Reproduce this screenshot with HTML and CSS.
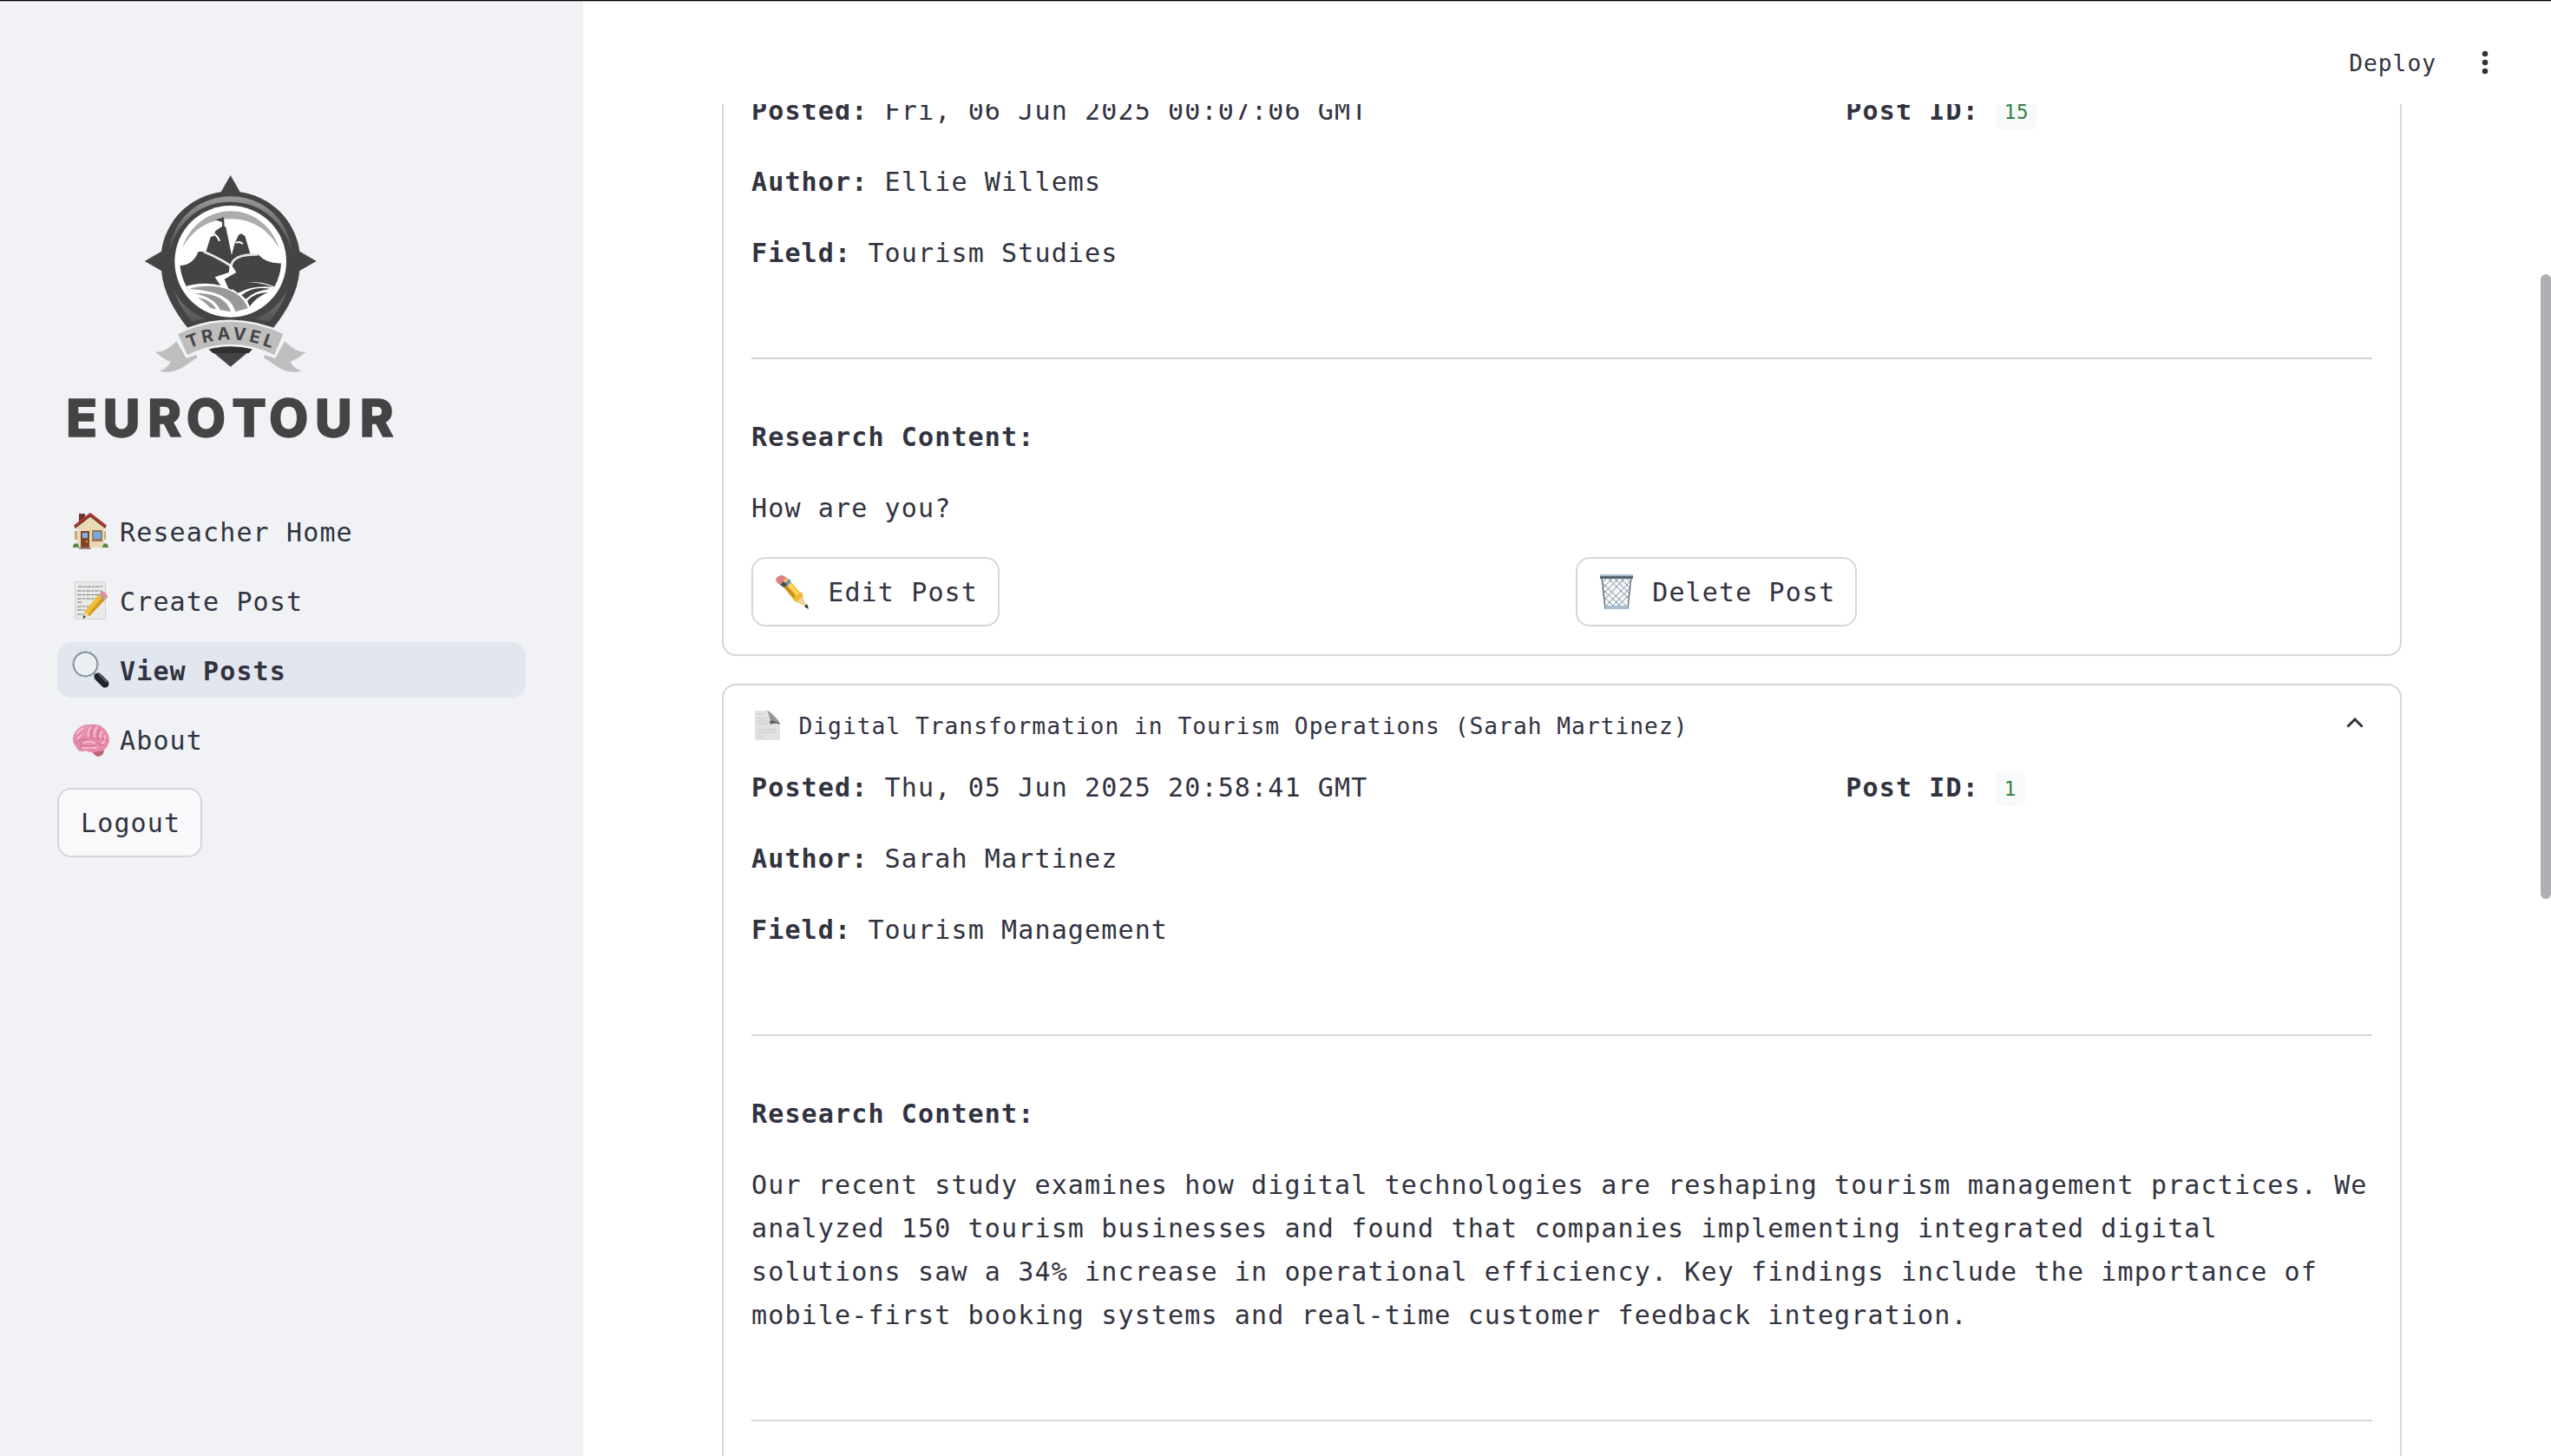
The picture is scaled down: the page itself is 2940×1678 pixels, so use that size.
FILE: index.html
```
<!DOCTYPE html>
<html lang="en">
<head>
<meta charset="utf-8">
<title>View Posts</title>
<link rel="stylesheet" href="styles.css">
</head>
<body>
<div class="app">
  <aside class="sidebar">
    <svg class="logo" viewBox="18 0 1242 1050" role="img" aria-label="Eurotour Travel">
      <defs>
        <linearGradient id="rim" x1="0" y1="0" x2="0" y2="1"><stop offset="0" stop-color="#999"/><stop offset="1" stop-color="#444"/></linearGradient>
        <linearGradient id="low" x1="0" y1="0" x2="0" y2="1"><stop offset="0" stop-color="#777"/><stop offset="1" stop-color="#555"/></linearGradient>
        <clipPath id="scene"><circle cx="617" cy="364" r="175"/></clipPath>
        <path id="arc" d="M474 664Q616 602 772 670"/>
      </defs>
      <path fill="#444" d="M617 66L650 124C762 140 842 226 856 329L914 363L856 396C850 470 812 535 762 598L694 664L617 728L540 664L472 598C422 535 384 470 378 396L320 363L378 329C392 226 472 140 584 124Z"/>
      <path fill="url(#rim)" d="M402 345C410 225 500 139 617 139C734 139 824 225 832 345C805 225 722 158 617 158C512 158 429 225 402 345Z"/>
      <path fill="url(#low)" d="M420 458Q450 530 532 562L484 572Q440 525 420 458ZM814 458Q784 530 702 562L750 572Q794 525 814 458Z"/>
      <circle cx="617" cy="364" r="193" fill="#fff"/>
      <path fill="#adadad" d="M450 318C475 240 540 190 617 190C694 190 760 240 785 318C745 250 690 217 617 217C544 217 488 250 450 318Z"/>
      <g clip-path="url(#scene)">
        <path fill="#444" d="M438 378Q485 380 506 330L532 330L548 280L560 275L565 258L588 243V228L565 220L594 211L596 242L601 246L621 342L632 300L645 272L655 268L667 276L685 337L712 340Q745 375 800 370V470H430Z"/>
        <path fill="none" stroke="#fff" stroke-width="6" d="M562 270Q575 280 579 294M635 300Q647 293 660 303"/>
        <path fill="none" stroke="#e8e8e8" stroke-width="8" d="M524 330Q575 350 622 382M620 378Q625 338 712 340"/>
        <path fill="#fff" d="M615 374L626 384L637 402L596 425L612 462L584 450L563 418L611 402Z"/>
        <path fill="#fff" d="M430 460Q540 420 620 462Q700 410 790 462V560H430Z"/>
        <path fill="#999" d="M474 459C550 435 655 455 677 526L634 538C620 485 565 465 474 459Z"/>
        <path fill="#999" d="M492 474C560 472 605 493 618 538L582 532C565 500 540 486 492 474ZM503 488Q550 495 568 529L548 526Q532 506 503 488Z"/>
        <path fill="#444" d="M618 456Q680 420 763 452Q695 445 643 473ZM655 481Q695 448 754 459Q700 465 670 494ZM675 500Q700 472 746 471Q705 488 683 520Z"/>
      </g>
      <path fill="#303030" d="M538 664Q616 638 696 664L680 681H556Z"/>
      <path fill="#bebebe" d="M357 677Q390 681 430 640L464 699L498 687L503 697C460 720 430 760 370 742Q398 735 410 711Q382 699 357 677ZM879 677Q846 681 804 640L772 699L736 687L731 697C774 720 804 760 864 742Q836 735 824 711Q852 699 879 677Z"/>
      <path fill="#bebebe" stroke="#f0f2f6" stroke-width="7" d="M430 613Q616 525 804 613L770 692Q616 616 466 692Z"/>
      <text class="ribbon"><textPath href="#arc" textLength="292">TRAVEL</textPath></text>
      <text class="wordmark" y="970" x="49 176 331 464 622 750 909 1064">EUROTOUR</text>
    </svg>
    <nav class="nav">
      <a class="nav-item">
        <svg class="nav-icon" viewBox="0 0 44 44"><path fill="#70362c" d="M8 2h7v11H8z"/><path fill="#ead9b5" d="M22 4L6 17v24h31V17z"/><path fill="#c8aa7a" d="M3 22h3v10H3zM37 22h2v10h-2z"/><path fill="none" stroke="#a93830" stroke-width="3.500" stroke-linejoin="round" d="M3 17L21 3L39 17"/><path fill="none" stroke="#443330" d="M3 19L21 5L39 19"/><path fill="#814328" d="M10 22h10v20H10z"/><path fill="#7db2e4" d="M12 24h6v6h-6z"/><path fill="#a07855" d="M23 21h12v13H23z"/><path fill="#73abdc" d="M24.500 23h9v8h-9z"/><circle cx="17" cy="34" r="1" fill="#efc33b"/><path fill="#57873e" d="M1 41a3 4 0 0 1 7 0zM35 41a3 4 0 0 1 7 0z"/><path fill="#968a80" d="M8 41h14v2H8z"/></svg>
        <span>Reseacher Home</span>
      </a>
      <a class="nav-item">
        <svg class="nav-icon" viewBox="0 0 44 44"><path fill="#e9e9e8" stroke="#d2d2d2" d="M3.500 0.500h35v43h-35z"/><path fill="none" stroke="#777" stroke-dasharray="5 1 3 1" d="M7 6h28M6 11h29M6 15.500h27M6 20h24M6 24h5M6 29h18M6 33h12M6 38h11"/><path fill="#f0bd38" d="M14 35L31 15l7 6-18 19z"/><path fill="#d29724" d="M18 39L35 18l3 3-18 19z"/><path fill="#9baabb" d="M31 15l3-3 7 6-3 4z"/><path fill="#e88d92" d="M34 12q4-1 7 5l-1 3-8-6z"/><path fill="#eed5a1" d="M14 35l6 4-7 3z"/><path fill="#333" d="M13 39l3 2-3 2z"/></svg>
        <span>Create Post</span>
      </a>
      <a class="nav-item active">
        <svg class="nav-icon" viewBox="0 0 44 44"><path stroke="#999ca0" stroke-width="3" d="M24 25l5 5"/><path stroke="#1e2327" stroke-width="9" stroke-linecap="round" d="M30 30l8 8"/><path stroke="#67717a" stroke-width="1.500" d="M31 27l9 9"/><circle cx="15.500" cy="15.500" r="14" fill="#edf0f3" stroke="#686e75" stroke-width="2"/><circle cx="15.500" cy="15.500" r="14.700" fill="none" stroke="#b5cae4"/></svg>
        <span>View Posts</span>
      </a>
      <a class="nav-item">
        <svg class="nav-icon" viewBox="0 0 44 44"><path fill="#bd6579" d="M22 35q7-4 15 0-1 7-8 7-4-2-7-7z"/><path fill="#e68bab" d="M2 27Q-1 19 5 12Q11 4 21 5Q33 3 39 12Q45 20 42 27Q39 36 30 36Q22 39 16 35Q7 38 5 31Z"/><path fill="none" stroke="#f7bed0" stroke-width="2" stroke-linecap="round" d="M6 16q3-5 7-7M16 8q-3 7-9 13M22 8q-5 6-3 11M29 8q-4 4-3 12M35 13q-4 3-2 9M38 18q1 6-4 10M13 26q9-3 14 1M13 32q8-1 15 0"/><path fill="none" stroke="#cb6c8d" d="M4 26q8-6 12-3q4-6 12-1q8-2 13 3M10 32q-1-7 6-9M15 8q-1 8-8 9M24 6q-3 7-2 13M32 8q-4 7-2 14M12 29q11 4 17-3q4 4 8 2"/></svg>
        <span>About</span>
      </a>
    </nav>
    <button class="button logout"><span>Logout</span></button>
  </aside>

  <main class="main">
    <header class="toolbar">
      <span class="deploy">Deploy</span>
      <svg class="menu" viewBox="0 0 8 28"><circle cx="4" cy="4" r="3.300"/><circle cx="4" cy="14" r="3.300"/><circle cx="4" cy="24" r="3.300"/></svg>
    </header>
    <div class="scroll">
      <div class="posts">
        <section class="card continued">
          <div class="meta">
            <div class="facts">
              <p><b>Posted:</b> Fri, 06 Jun 2025 00:07:06 GMT</p>
              <p><b>Author:</b> Ellie Willems</p>
              <p><b>Field:</b> Tourism Studies</p>
            </div>
            <div class="post-id"><b>Post ID:</b><code>15</code></div>
          </div>
          <hr>
          <div class="body">
            <p><b>Research Content:</b></p>
            <p>How are you?</p>
          </div>
          <div class="actions">
            <div><button class="button"><svg class="emoji" viewBox="0 0 42 42"><path fill="#efb930" d="M8 12l7-7 18 20 2 11-11-4z"/><path fill="#ffd95a" d="M11 9l3-3 18 20-3 2z"/><path fill="#ca8c1d" d="M8 12l3-2 17 19-2 3z"/><path fill="#efb930" d="M22 28l10-7 2 7-7 6z"/><path fill="#efd39b" d="M26 33l7-7 6 14z"/><path fill="#282c31" d="M35 38l3-3 2 6z"/><path fill="#7392b1" d="M11 12l6-6 3 3-6 7z"/><path fill="#4b4c50" d="M6 12l5-3 4 4-4 3z"/><path fill="#dd8182" d="M2 7q2-5 8-5l5 3-8 8q-4-2-5-6z"/></svg><span>Edit Post</span></button></div>
            <div><button class="button"><svg class="emoji" viewBox="0 0 42 42"><path fill="#f4f6f8" d="M4 4h34l-4 36H8z"/><path fill="none" stroke="#768394" stroke-width="0.900" d="M4 10l29 28M4 17l24 23M5 25l15 15M10 4l25 25M17 4l20 20M24 4l13 13M31 4l6 6M38 8L8 38M37 16L14 40M36 24L20 40M32 4L6 31M25 4L5 24M18 4L4 18M11 4L4 11"/><path fill="none" stroke="#697581" stroke-width="1.500" d="M4 4l4 36h26l4-36"/><path fill="#59636e" d="M2 2h38v4H2z"/><path fill="#a7bdd2" d="M2 1h38v2H2zM8 37h26v4H8z"/></svg><span>Delete Post</span></button></div>
          </div>
        </section>

        <section class="card">
          <div class="summary">
            <svg class="page-icon" viewBox="0 0 37 36"><path fill="#e2e2e2" d="M4 1h17q1 11 12 15v19H4z"/><path fill="none" stroke="#c7c7c7" d="M7 5h7M7 10h12M7 13h13M7 16h14M7 23h22M7 26h20M7 31h7"/><path fill="#989898" d="M18 1q4 1 11 9 4 4 4 7-6-3-11-1-1-10-4-15z"/><path fill="#606060" d="M21 13q6-2 12 4-6-3-11 0z"/></svg>
            <span class="summary-title">Digital Transformation in Tourism Operations (Sarah Martinez)</span>
            <svg class="chevron" viewBox="0 0 20 12"><path d="M1.500 10.500L10 2l8.500 8.500"/></svg>
          </div>
          <div class="meta">
            <div class="facts">
              <p><b>Posted:</b> Thu, 05 Jun 2025 20:58:41 GMT</p>
              <p><b>Author:</b> Sarah Martinez</p>
              <p><b>Field:</b> Tourism Management</p>
            </div>
            <div class="post-id"><b>Post ID:</b><code>1</code></div>
          </div>
          <hr>
          <div class="body">
            <p><b>Research Content:</b></p>
            <p>Our recent study examines how digital technologies are reshaping tourism management practices. We analyzed 150 tourism businesses and found that companies implementing integrated digital solutions saw a 34% increase in operational efficiency. Key findings include the importance of mobile-first booking systems and real-time customer feedback integration.</p>
          </div>
          <hr class="closing">
        </section>
      </div>
    </div>
  </main>
  <div class="window-edge"></div>
  <div class="scrollbar"></div>
</div>
</body>
</html>
```
FILE: styles.css
```
* { box-sizing: border-box; }
body {
  margin: 0;
  background: #fff;
  color: #31333f;
  font: 30px/50px "DejaVu Sans Mono", monospace;
  letter-spacing: 1.14px;
}
p { margin: 0; }
b { font-weight: 700; }
.app { position: relative; display: flex; height: 1678px; overflow: hidden; }

.sidebar { flex: none; width: 672px; padding: 180px 66px 0; background: #f0f2f6; }
.logo { display: block; width: 414px; height: 350px; margin-bottom: 50px; }
.ribbon { font: 700 60px Inter, sans-serif; fill: #444; letter-spacing: 0; }
.wordmark { font: 800 176px Inter, sans-serif; fill: #444; stroke: #444; stroke-width: 4px; letter-spacing: 0; }
.nav { display: flex; flex-direction: column; gap: 16px; margin-bottom: 24px; }
.nav-item { display: flex; align-items: center; gap: 11px; width: 540px; height: 64px; padding-left: 17px; border-radius: 16px; }
.nav-item span { padding-top: 3px; }
.nav-icon { width: 44px; height: 44px; fill: none; }
.active { background: #e2e7ef; font-weight: 700; }

.button {
  display: inline-flex;
  align-items: center;
  height: 80px;
  padding: 0 23px 0 24px;
  border: 2px solid #d6d6d9;
  border-radius: 16px;
  background: #fff;
  color: inherit;
  font: inherit;
  letter-spacing: inherit;
  white-space: nowrap;
}
.button span { padding: 2px 0 0 1px; }
.logout { background: #f9f9fb; }
.emoji { width: 42px; height: 42px; margin-right: 19.2px; }

.main { flex: 1; min-width: 0; }
.toolbar { display: flex; align-items: center; justify-content: flex-end; gap: 52px; height: 120px; padding: 24px 72px 0 0; }
.deploy { padding-top: 2px; font-size: 26.25px; letter-spacing: 1px; }
.menu { width: 8px; height: 28px; fill: #31333f; }

.scroll { height: 1558px; overflow: hidden; }
.posts { display: flex; flex-direction: column; gap: 32px; width: 1936px; margin: -112px 0 0 160px; }
.card { padding: 0 32px 32px; border: 2px solid #d6d6d9; border-radius: 16px; }
.continued { padding-top: 92px; }
.summary { display: flex; align-items: center; height: 92px; font-size: 26.25px; letter-spacing: 1px; }
.page-icon { width: 37px; height: 36px; margin-right: 17.5px; }
.summary-title { flex: 1; padding-top: 2px; }
.chevron { width: 20px; height: 12px; margin: -6px 10px 0 0; fill: none; stroke: #31333f; stroke-width: 3; }
.meta { display: grid; grid-template-columns: 1229.3px 1fr; gap: 32px; }
.facts, .body { display: flex; flex-direction: column; gap: 32px; }
p, .post-id { position: relative; top: 1px; }
.post-id { display: flex; gap: 19.2px; height: 50px; }
code {
  height: 40px;
  margin-top: 6px;
  padding: 0 9.6px;
  border-radius: 8px;
  background: #f8f9fb;
  color: #35823f;
  font: 22.5px/41px "DejaVu Sans Mono", monospace;
  letter-spacing: 0.85px;
}
hr { height: 2px; margin: 96px 0 64px; border: 0; background: #d6d6d9; }
.actions { display: grid; grid-template-columns: 1fr 1fr; gap: 32px; height: 80px; margin-top: 32px; }
.closing { margin-bottom: 140px; }

.window-edge { position: absolute; inset: 0 0 auto; height: 2px; border-top: 1px solid #000; background: #b4b4b6; }
.scrollbar { position: absolute; top: 316px; right: 0; width: 12px; height: 720px; border-radius: 6px; background: #b0b0b4; }
```
